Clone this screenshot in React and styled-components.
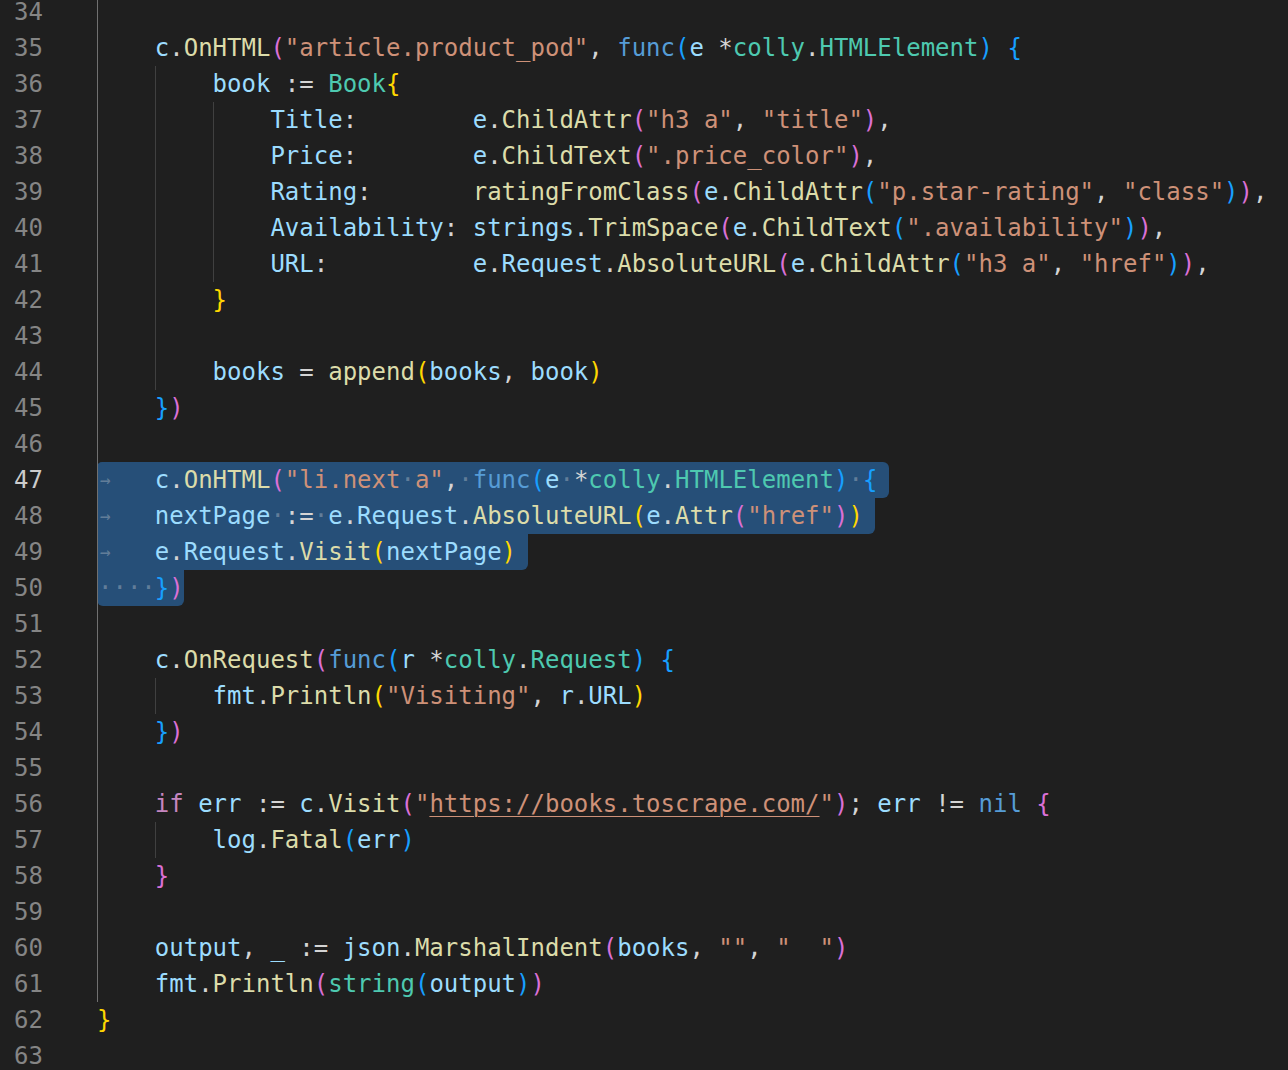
import React from "react";
import styled, { createGlobalStyle } from "styled-components";

const GlobalStyle = createGlobalStyle`
  html, body {
    margin: 0;
    background: #1f1f1f;
    overflow: hidden;
  }
`;

const palette = {
  v: "#9cdcfe",
  f: "#dcdcaa",
  s: "#ce9178",
  u: "#ce9178",
  t: "#4ec9b0",
  k: "#569cd6",
  c: "#c586c0",
  p: "#d4d4d4",
  w: "rgba(227, 228, 226, 0.32)",
  1: "#ffd700",
  2: "#da70d6",
  3: "#179fff",
};

// n, indent guides, source tokens ("key:text" joined by |), whitespace marker, selection corners
const lines = [
  [34, 1, ""],
  [35, 1, 'v:c|p:.|f:OnHTML|2:(|s:"article.product_pod"|p:, |k:func|3:(|v:e |p:*|t:colly|p:.|t:HTMLElement|3:)|p: |3:{'],
  [36, 2, "v:book|p: := |t:Book|1:{"],
  [37, 3, 'v:Title|p::        |v:e|p:.|f:ChildAttr|2:(|s:"h3 a"|p:, |s:"title"|2:)|p:,'],
  [38, 3, 'v:Price|p::        |v:e|p:.|f:ChildText|2:(|s:".price_color"|2:)|p:,'],
  [39, 3, 'v:Rating|p::       |f:ratingFromClass|2:(|v:e|p:.|f:ChildAttr|3:(|s:"p.star-rating"|p:, |s:"class"|3:)|2:)|p:,'],
  [40, 3, 'v:Availability|p:: |v:strings|p:.|f:TrimSpace|2:(|v:e|p:.|f:ChildText|3:(|s:".availability"|3:)|2:)|p:,'],
  [41, 3, 'v:URL|p::          |v:e|p:.|v:Request|p:.|f:AbsoluteURL|2:(|v:e|p:.|f:ChildAttr|3:(|s:"h3 a"|p:, |s:"href"|3:)|2:)|p:,'],
  [42, 2, "1:}"],
  [43, 2, ""],
  [44, 2, "v:books|p: = |f:append|1:(|v:books|p:, |v:book|1:)"],
  [45, 1, "3:}|2:)"],
  [46, 1, ""],
  [47, 1, 'v:c|p:.|f:OnHTML|2:(|s:"li.next|w:·|s:a"|p:,|w:·|k:func|3:(|v:e|w:·|p:*|t:colly|p:.|t:HTMLElement|3:)|w:·|3:{', "tab", "5px 6px 6px 0"],
  [48, 1, 'v:nextPage|w:·|p::=|w:·|v:e|p:.|v:Request|p:.|f:AbsoluteURL|1:(|v:e|p:.|f:Attr|2:(|s:"href"|2:)|1:)', "tab", "0 0 6px 0"],
  [49, 1, "v:e|p:.|v:Request|p:.|f:Visit|1:(|v:nextPage|1:)", "tab", "0 0 6px 0"],
  [50, 1, "3:}|2:)", "dots", "0 0 6px 6px"],
  [51, 1, ""],
  [52, 1, "v:c|p:.|f:OnRequest|2:(|k:func|3:(|v:r |p:*|t:colly|p:.|t:Request|3:)|p: |3:{"],
  [53, 2, 'v:fmt|p:.|f:Println|1:(|s:"Visiting"|p:, |v:r|p:.|v:URL|1:)'],
  [54, 1, "3:}|2:)"],
  [55, 1, ""],
  [56, 1, 'c:if|p: |v:err|p: := |v:c|p:.|f:Visit|2:(|s:"|u:https://books.toscrape.com/|s:"|2:)|p:; |v:err|p: != |k:nil|p: |2:{'],
  [57, 2, "v:log|p:.|f:Fatal|3:(|v:err|3:)"],
  [58, 1, "2:}"],
  [59, 1, ""],
  [60, 1, 'v:output|p:, |v:_|p: := |v:json|p:.|f:MarshalIndent|2:(|v:books|p:, |s:""|p:, |s:"  "|2:)'],
  [61, 1, "v:fmt|p:.|f:Println|2:(|t:string|3:(|v:output|3:)|2:)"],
  [62, 0, "1:}"],
  [63, 0, ""],
];

const ACTIVE_LINE = 47;

const Editor = styled.div`
  margin-top: -6px;
  font-family: "DejaVu Sans Mono", "Liberation Mono", monospace;
  font-size: 24px;
  line-height: 36px;
  color: #d4d4d4;
`;

const Row = styled.div`
  display: flex;
  height: 36px;
`;

const LineNo = styled.div`
  width: 43px;
  flex: none;
  text-align: right;
  color: ${(p) => (p.$active ? "#cccccc" : "#858585")};
`;

const Code = styled.div`
  display: flex;
  margin-left: 54px;
  white-space: pre;
`;

const Guide = styled.span`
  display: inline-flex;
  align-items: center;
  width: 4ch;
  height: 36px;
  box-sizing: border-box;
  border-left: 1px solid ${(p) => (p.$active ? "#707070" : "#404040")};
  color: ${palette.w};
`;

const TabArrow = styled.span`
  font-size: 18px;
  margin-left: 2px;
`;

const Selection = styled.span`
  display: flex;
  height: 36px;
  background: #264f78;
  border-radius: ${(p) => p.$radius};
  padding-right: ${(p) => p.$eol}px;
`;

const Token = styled.span`
  color: ${(p) => palette[p.$kind]};
  text-decoration: ${(p) => (p.$kind === "u" ? "underline" : "none")};
  text-underline-offset: 4px;
  text-decoration-thickness: 1px;
`;

function Tokens({ src }) {
  if (!src) return null;
  return src.split("|").map((part, i) => {
    const at = part.indexOf(":");
    return (
      <Token key={i} $kind={part.slice(0, at)}>
        {part.slice(at + 1)}
      </Token>
    );
  });
}

function Guides({ count }) {
  return Array.from({ length: count }, (_, i) => (
    <Guide key={i} $active={i === 0} />
  ));
}

function CodeLine({ guides, src, ws, radius }) {
  if (ws) {
    return (
      <Code>
        <Selection $radius={radius} $eol={ws === "tab" ? 12 : 0}>
          <Guide $active>
            {ws === "tab" ? <TabArrow>→</TabArrow> : "····"}
          </Guide>
          <Tokens src={src} />
        </Selection>
      </Code>
    );
  }
  return (
    <Code>
      <Guides count={guides} />
      <Tokens src={src} />
    </Code>
  );
}

export default function App() {
  return (
    <>
      <GlobalStyle />
      <Editor>
        {lines.map(([n, guides, src, ws, radius]) => (
          <Row key={n}>
            <LineNo $active={n === ACTIVE_LINE}>{n}</LineNo>
            <CodeLine guides={guides} src={src} ws={ws} radius={radius} />
          </Row>
        ))}
      </Editor>
    </>
  );
}
